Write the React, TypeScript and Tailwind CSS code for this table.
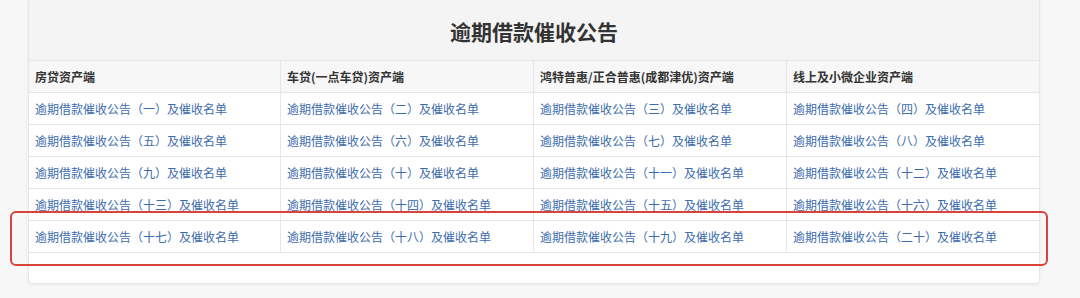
const columns = ['房贷资产端', '车贷(一点车贷)资产端', '鸿特普惠/正合普惠(成都津优)资产端', '线上及小微企业资产端']

const numerals = [
  '一', '二', '三', '四', '五', '六', '七', '八', '九', '十',
  '十一', '十二', '十三', '十四', '十五', '十六', '十七', '十八', '十九', '二十',
]

const font = { fontFamily: '"PingFang SC", "Noto Sans CJK SC", "Liberation Sans", sans-serif' }

export default function App() {
  const rows: string[][] = []
  for (let i = 0; i < numerals.length; i += 4) rows.push(numerals.slice(i, i + 4))

  return (
    <div className="relative h-[298px] w-[1080px] overflow-hidden bg-[#f7f7f7]" style={font}>
      <div className="ml-[28px] w-[1012px] rounded-b-[4px] border-x border-b border-[#e6e6e6] bg-[#f4f4f4] shadow-[0_1px_3px_rgba(0,0,0,0.06)]">
        <h2 className="h-[60px] pt-[1px] text-center text-[21px] font-bold leading-[60px] text-[#333]">
          逾期借款催收公告
        </h2>

        <div className="rounded-b-[4px] bg-white">
          <div className="grid grid-cols-[251px_253px_253px_1fr] border-t border-[#e6e6e6] bg-[#f7f7f7]">
            {columns.map((c, i) => (
              <div
                key={c}
                className={`flex h-[31px] items-center px-[6px] text-[12px] font-bold text-[#333] ${i > 0 ? 'border-l border-[#e6e6e6]' : ''}`}
              >
                {c}
              </div>
            ))}
          </div>

          {rows.map((row, r) => (
            <div
              key={r}
              className={`grid grid-cols-[251px_253px_253px_1fr] border-t border-[#e6e6e6] ${r === rows.length - 1 ? 'border-b' : ''}`}
            >
              {row.map((n, i) => (
                <div
                  key={n}
                  className={`flex h-[31px] items-center px-[6px] text-[12px] ${i > 0 ? 'border-l border-[#e6e6e6]' : ''}`}
                >
                  <a href="#" className="text-[#3d6cad]">
                    逾期借款催收公告（{n}）及催收名单
                  </a>
                </div>
              ))}
            </div>
          ))}

          <div className="h-[30px]" />
        </div>
      </div>

      {/* highlight frame around the newest row */}
      <div className="pointer-events-none absolute left-[10px] top-[211px] h-[55px] w-[1038px] rounded-[6px] border-2 border-[#d9433d]" />
    </div>
  )
}
